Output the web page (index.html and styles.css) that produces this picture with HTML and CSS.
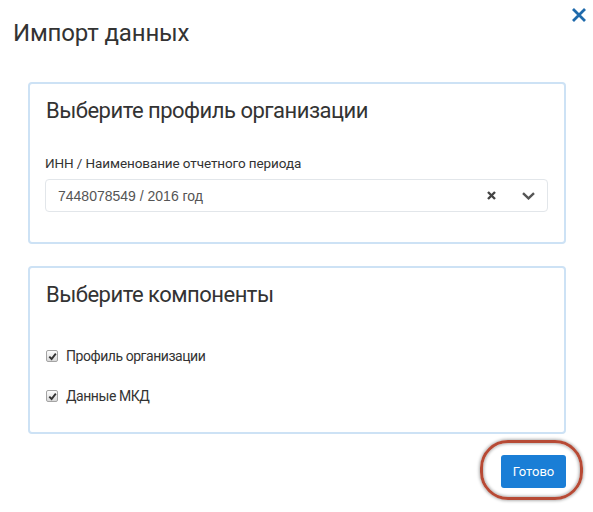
FILE: index.html
```html
<!DOCTYPE html>
<html lang="ru">
<head>
<meta charset="utf-8">
<title>Импорт данных</title>
<link rel="stylesheet" href="styles.css">
</head>
<body>
<div class="dialog">
  <div class="dialog-header">
    <h1 class="dialog-title">Импорт данных</h1>
    <button class="close-btn" type="button" aria-label="Закрыть">
      <svg width="16" height="16" viewBox="0 0 16 16"><path d="M2 2L14 14M14 2L2 14" stroke="#1f6aab" stroke-width="2.8" stroke-linecap="butt" fill="none"/></svg>
    </button>
  </div>
  <div class="dialog-body">
    <section class="panel panel-profile">
      <h2 class="panel-title">Выберите профиль организации</h2>
      <label class="field-label">ИНН / Наименование отчетного периода</label>
      <div class="select">
        <span class="select-value">7448078549 / 2016 год</span>
        <span class="select-clear">
          <svg width="9" height="9" viewBox="0 0 9 9"><path d="M1 1L8 8M8 1L1 8" stroke="#444" stroke-width="2.4" fill="none"/></svg>
        </span>
        <span class="select-arrow">
          <svg width="13" height="8" viewBox="0 0 13 8"><path d="M1 1.2L6.5 6.4L12 1.2" stroke="#555" stroke-width="2.4" fill="none"/></svg>
        </span>
      </div>
    </section>
    <section class="panel panel-components">
      <h2 class="panel-title">Выберите компоненты</h2>
      <div class="check-list">
        <label class="check-row">
          <span class="checkbox"><svg width="9" height="9" viewBox="0 0 9 9"><path d="M1.3 4.6L3.6 7L7.8 1.6" stroke="#333" stroke-width="1.9" fill="none"/></svg></span>
          <span class="check-text">Профиль организации</span>
        </label>
        <label class="check-row">
          <span class="checkbox"><svg width="9" height="9" viewBox="0 0 9 9"><path d="M1.3 4.6L3.6 7L7.8 1.6" stroke="#333" stroke-width="1.9" fill="none"/></svg></span>
          <span class="check-text">Данные МКД</span>
        </label>
      </div>
    </section>
  </div>
  <div class="dialog-footer">
    <div class="btn-wrap">
      <button class="btn-primary" type="button">Готово</button>
      <span class="highlight-ring"></span>
    </div>
  </div>
</div>
</body>
</html>
```

FILE: styles.css
```css
html, body {
  margin: 0;
  padding: 0;
  background: #fff;
}
body {
  font-family: Roboto, "Noto Sans", sans-serif;
  color: #333;
}
.dialog {
  width: 593px;
  height: 512px;
  position: relative;
}
.dialog-header {
  display: flex;
  justify-content: space-between;
  align-items: flex-start;
  padding: 0 6px 0 13px;
}
.dialog-title {
  margin: 20px 0 0;
  font-size: 24px;
  line-height: 26px;
  font-weight: 400;
  color: #333;
  letter-spacing: -0.15px;
}
.close-btn {
  margin-top: 7px;
  padding: 0;
  border: 0;
  background: none;
  width: 16px;
  height: 16px;
  display: block;
}
.close-btn svg { display: block; }
.dialog-body {
  padding: 36px 27px 0 28px;
  display: flex;
  flex-direction: column;
  gap: 22px;
}
.panel {
  border: 2px solid #cde2f5;
  border-radius: 4px;
  padding: 15px 16px 0 16px;
}
.panel-profile { height: 143px; }
.panel-components { height: 149px; }
.panel-title {
  margin: 0;
  font-size: 22px;
  line-height: 24px;
  font-weight: 400;
  color: #333;
  letter-spacing: -0.5px;
}
.field-label {
  display: block;
  margin-top: 30px;
  margin-left: -1px;
  font-size: 13.5px;
  line-height: 20px;
  color: #333;
  letter-spacing: -0.1px;
}
.select {
  margin-top: 6px;
  margin-left: -1px;
  height: 31px;
  border: 1px solid #e2e6ea;
  border-radius: 4px;
  display: flex;
  align-items: center;
  padding: 0 12px 0 12px;
}
.select-value {
  flex: 1;
  font-family: "Liberation Sans", Arial, sans-serif;
  font-size: 14px;
  color: #555;
}
.select-clear {
  display: flex;
  margin-right: 26px;
}
.select-arrow { display: flex; }
.check-list {
  margin-top: 39px;
  display: flex;
  flex-direction: column;
  gap: 20px;
}
.check-row {
  display: flex;
  align-items: center;
  height: 20px;
  font-size: 14px;
  color: #333;
  letter-spacing: -0.45px;
}
.checkbox {
  width: 10px;
  height: 10px;
  margin: 0 8px 0 0;
  border: 1px solid #a4a4a4;
  border-radius: 2px;
  background: linear-gradient(#fdfdfd, #d9d9d9);
  display: flex;
  align-items: center;
  justify-content: center;
}
.checkbox svg { display: block; }
.dialog-footer {
  display: flex;
  justify-content: flex-end;
  padding: 21px 27px 0 0;
}
.btn-wrap {
  position: relative;
}
.btn-primary {
  display: block;
  width: 65px;
  height: 33px;
  border: 0;
  border-radius: 3px;
  background: #1a7ed6;
  color: #fff;
  font-family: Roboto, sans-serif;
  font-size: 13px;
  padding: 0;
}
.highlight-ring {
  position: absolute;
  left: -21px;
  right: -17px;
  top: -15px;
  bottom: -12px;
  border: 3px solid #b74a35;
  border-radius: 28px;
  box-shadow: 0 0 3px 1px rgba(0,0,0,0.3), inset 0 0 3px 1px rgba(0,0,0,0.3);
  pointer-events: none;
}
```
